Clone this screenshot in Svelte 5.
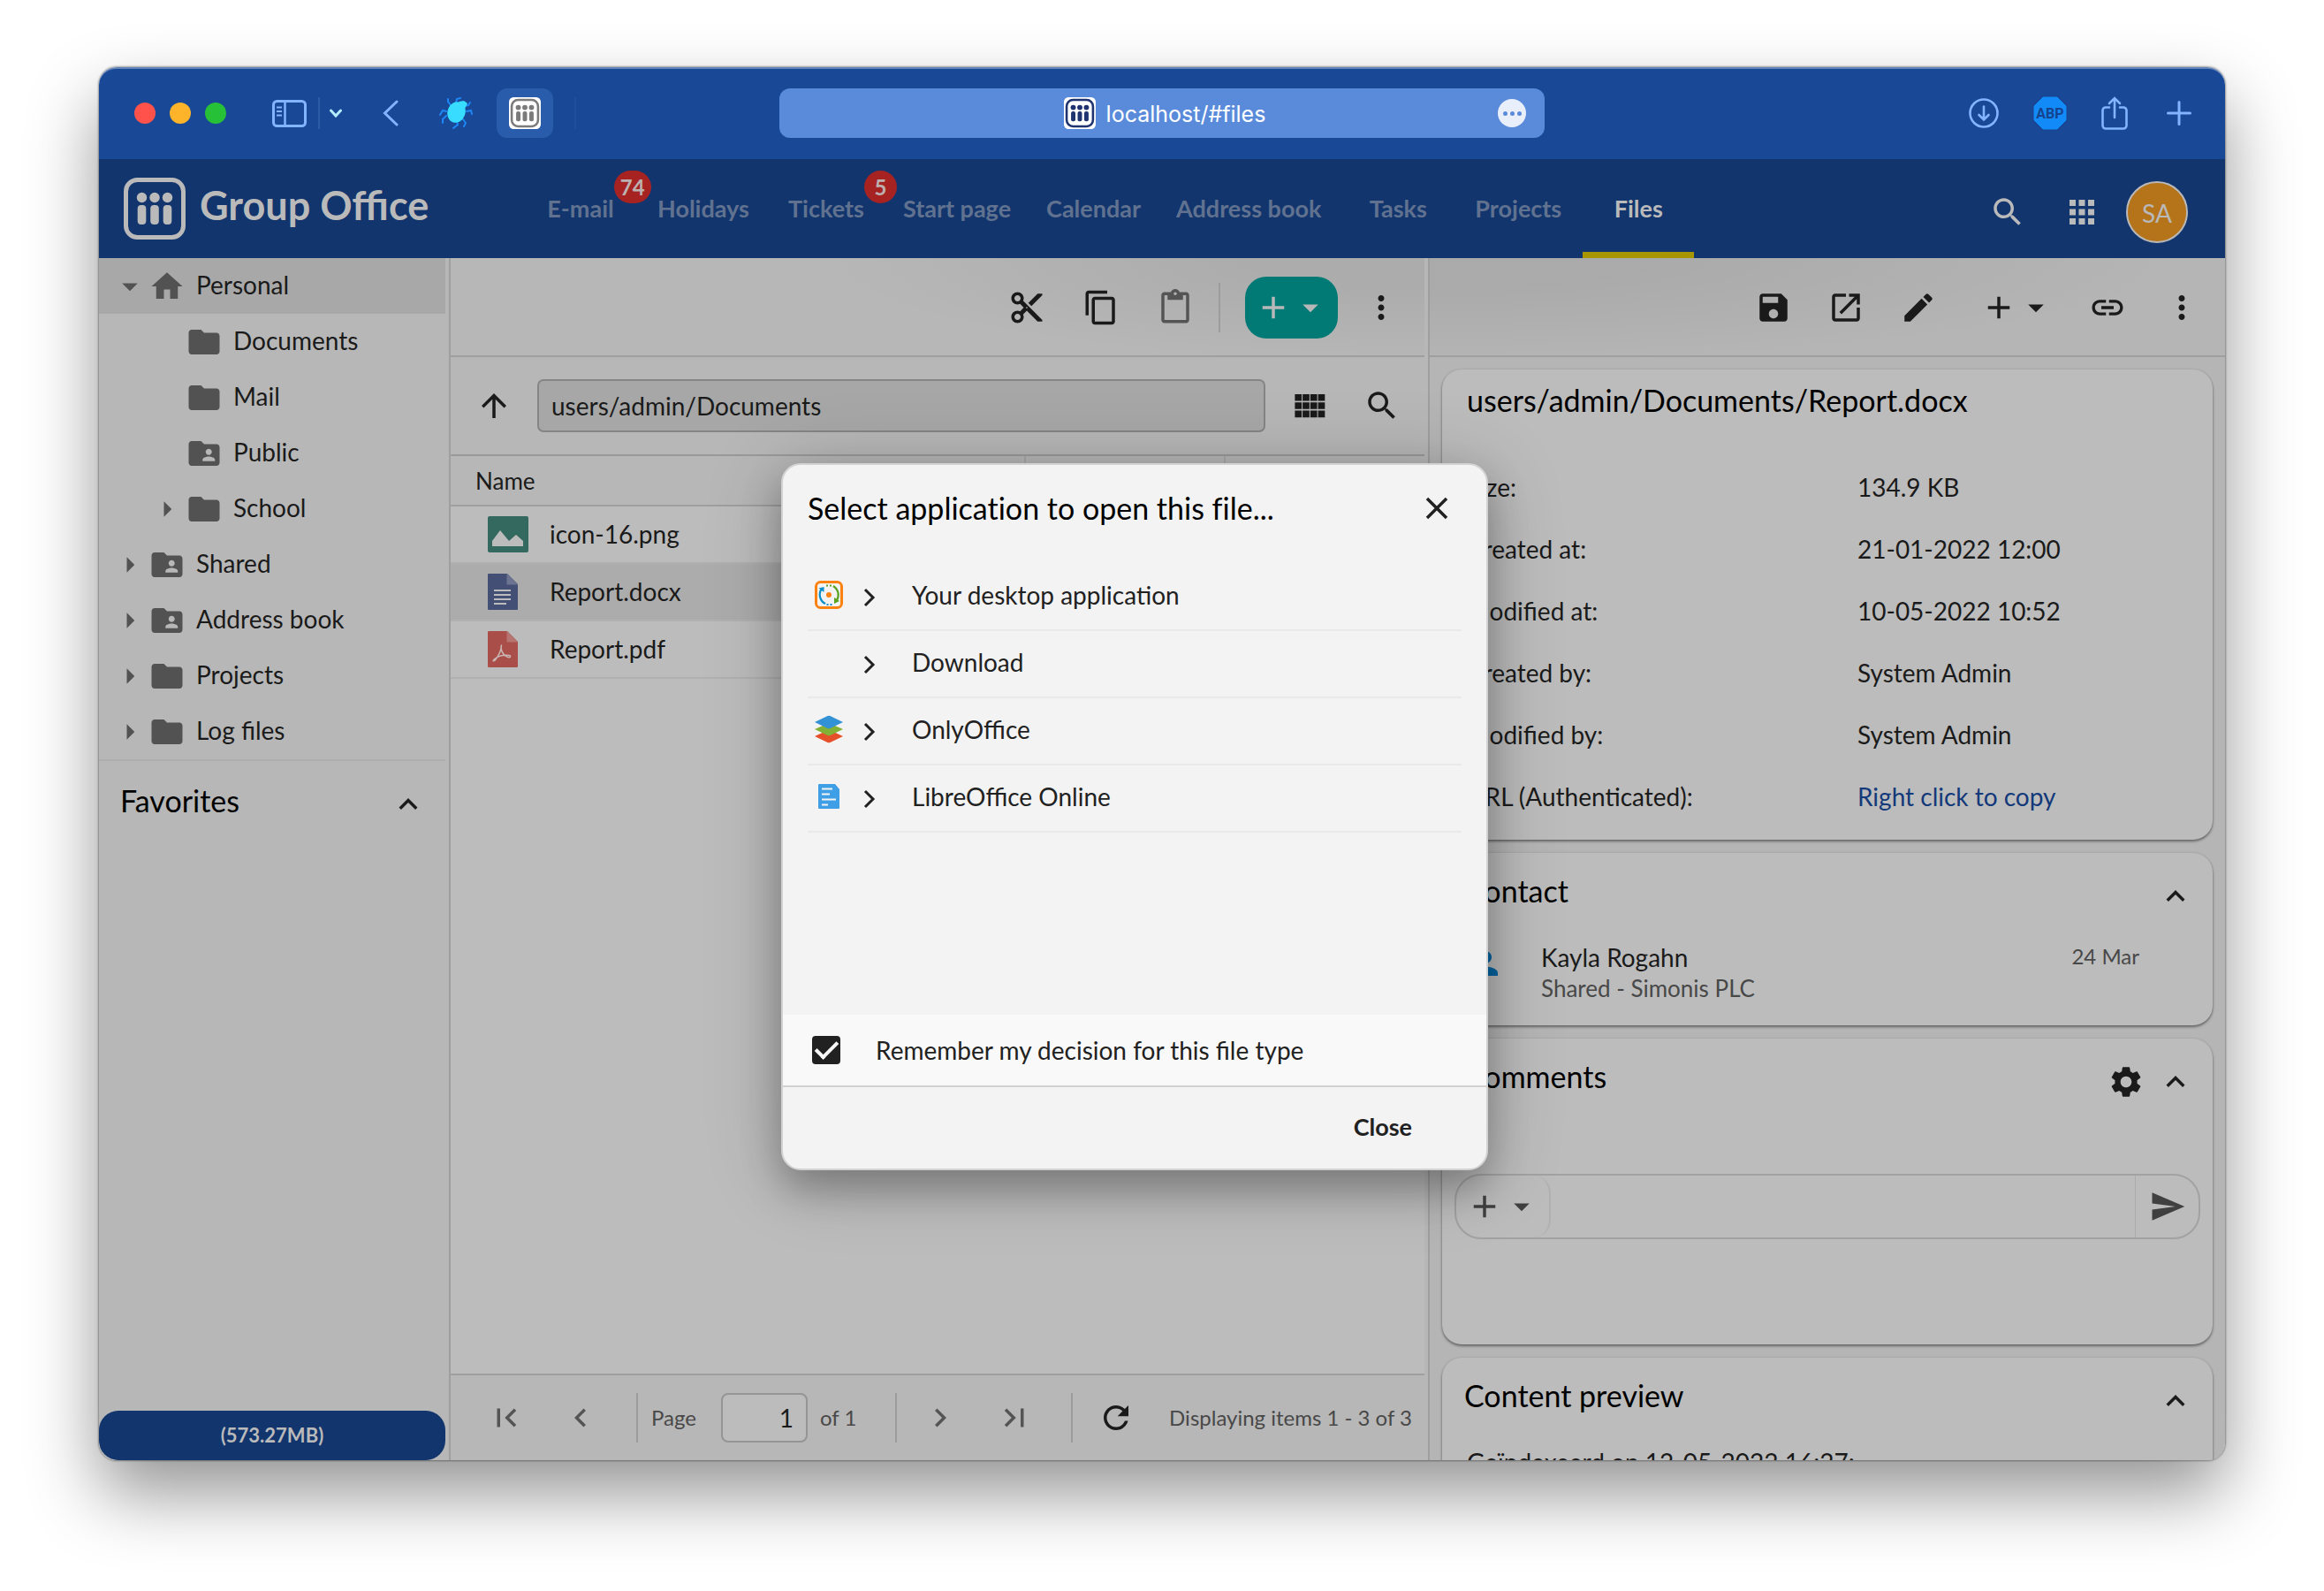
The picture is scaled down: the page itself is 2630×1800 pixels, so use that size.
<script>
  const icons = {
    home: 'M10 20v-6h4v6h5v-8h3L12 3 2 12h3v8z',
    folder: 'M10 4H4c-1.1 0-2 .9-2 2v12c0 1.1.9 2 2 2h16c1.1 0 2-.9 2-2V8c0-1.1-.9-2-2-2h-8l-2-2z',
    shared: 'M20 6h-8l-2-2H4c-1.1 0-1.99.9-1.99 2L2 18c0 1.1.9 2 2 2h16c1.1 0 2-.9 2-2V8c0-1.1-.9-2-2-2zm-5 3c1.1 0 2 .9 2 2s-.9 2-2 2-2-.9-2-2 .9-2 2-2zm4 8h-8v-1c0-1.33 2.67-2 4-2s4 .67 4 2v1z',
    caretDown: 'M7 10l5 5 5-5z',
    caretRight: 'M10 17l5-5-5-5z',
    up: 'M12 8l-6 6 1.41 1.41L12 10.83l4.59 4.58L18 14z',
    left: 'M15.41 7.41L14 6l-6 6 6 6 1.41-1.41L10.83 12z',
    right: 'M10 6L8.59 7.41 13.17 12l-4.58 4.59L10 18l6-6z',
    first: 'M18.41 16.59L13.82 12l4.59-4.59L17 6l-6 6 6 6zM6 6h2v12H6z',
    last: 'M5.59 7.41L10.18 12l-4.59 4.59L7 18l6-6-6-6zM16 6h2v12h-2z',
    cut: 'M9.64 7.64c.23-.5.36-1.05.36-1.64 0-2.21-1.79-4-4-4S2 3.79 2 6s1.79 4 4 4c.59 0 1.14-.13 1.64-.36L10 12l-2.36 2.36C7.14 14.13 6.59 14 6 14c-2.21 0-4 1.79-4 4s1.79 4 4 4 4-1.79 4-4c0-.59-.13-1.14-.36-1.64L12 14l7 7h3v-1L9.64 7.64zM6 8c-1.1 0-2-.89-2-2s.9-2 2-2 2 .89 2 2-.9 2-2 2zm0 12c-1.1 0-2-.89-2-2s.9-2 2-2 2 .89 2 2-.9 2-2 2zm6-7.5c-.28 0-.5-.22-.5-.5s.22-.5.5-.5.5.22.5.5-.22.5-.5.5zM19 3l-6 6 2 2 7-7V3z',
    copy: 'M16 1H4c-1.1 0-2 .9-2 2v14h2V3h12V1zm3 4H8c-1.1 0-2 .9-2 2v14c0 1.1.9 2 2 2h11c1.1 0 2-.9 2-2V7c0-1.1-.9-2-2-2zm0 16H8V7h11v14z',
    paste: 'M19 2h-4.18C14.4.84 13.3 0 12 0c-1.3 0-2.4.84-2.82 2H5c-1.1 0-2 .9-2 2v16c0 1.1.9 2 2 2h14c1.1 0 2-.9 2-2V4c0-1.1-.9-2-2-2zm-7 0c.55 0 1 .45 1 1s-.45 1-1 1-1-.45-1-1 .45-1 1-1zm7 18H5V4h2v3h10V4h2v16z',
    add: 'M19 13h-6v6h-2v-6H5v-2h6V5h2v6h6v2z',
    more: 'M12 8c1.1 0 2-.9 2-2s-.9-2-2-2-2 .9-2 2 .9 2 2 2zm0 2c-1.1 0-2 .9-2 2s.9 2 2 2 2-.9 2-2-.9-2-2-2zm0 6c-1.1 0-2 .9-2 2s.9 2 2 2 2-.9 2-2-.9-2-2-2z',
    arrowUp: 'M4 12l1.41 1.41L11 7.83V20h2V7.83l5.58 5.59L20 12l-8-8-8 8z',
    comfy: 'M2.5 4.5h4.4v4.4H2.5zM7.5 4.5h4.4v4.4H7.5zM12.5 4.5h4.4v4.4h-4.4zM17.5 4.5h4.4v4.4h-4.4zM2.5 9.8h4.4v4.4H2.5zM7.5 9.8h4.4v4.4H7.5zM12.5 9.8h4.4v4.4h-4.4zM17.5 9.8h4.4v4.4h-4.4zM2.5 15.1h4.4v4.4H2.5zM7.5 15.1h4.4v4.4H7.5zM12.5 15.1h4.4v4.4h-4.4zM17.5 15.1h4.4v4.4h-4.4z',
    search: 'M15.5 14h-.79l-.28-.27C15.41 12.59 16 11.11 16 9.5 16 5.91 13.09 3 9.5 3S3 5.91 3 9.5 5.91 16 9.5 16c1.61 0 3.09-.59 4.23-1.57l.27.28v.79l5 4.99L20.49 19l-4.99-5zm-6 0C7.01 14 5 11.99 5 9.5S7.01 5 9.5 5 14 7.01 14 9.5 11.99 14 9.5 14z',
    apps: 'M4 4h4v4H4zM10 4h4v4h-4zM16 4h4v4h-4zM4 10h4v4H4zM10 10h4v4h-4zM16 10h4v4h-4zM4 16h4v4H4zM10 16h4v4h-4zM16 16h4v4h-4z',
    save: 'M17 3H5c-1.11 0-2 .9-2 2v14c0 1.1.89 2 2 2h14c1.1 0 2-.9 2-2V7l-4-4zm-5 16c-1.66 0-3-1.34-3-3s1.34-3 3-3 3 1.34 3 3-1.34 3-3 3zm3-10H5V5h10v4z',
    open: 'M19 19H5V5h7V3H5c-1.11 0-2 .9-2 2v14c0 1.1.89 2 2 2h14c1.1 0 2-.9 2-2v-7h-2v7zM14 3v2h3.59l-9.83 9.83 1.41 1.41L19 6.41V10h2V3h-7z',
    edit: 'M3 17.25V21h3.75L17.81 9.94l-3.75-3.75L3 17.25zM20.71 7.04c.39-.39.39-1.02 0-1.41l-2.34-2.34c-.39-.39-1.02-.39-1.41 0l-1.83 1.83 3.75 3.75 1.83-1.83z',
    link: 'M3.9 12c0-1.71 1.39-3.1 3.1-3.1h4V7H7c-2.76 0-5 2.24-5 5s2.24 5 5 5h4v-1.9H7c-1.71 0-3.1-1.39-3.1-3.1zM8 13h8v-2H8v2zm9-6h-4v1.9h4c1.71 0 3.1 1.39 3.1 3.1s-1.39 3.1-3.1 3.1h-4V17h4c2.76 0 5-2.24 5-5s-2.24-5-5-5z',
    gear: 'M19.14 12.94c.04-.3.06-.61.06-.94 0-.32-.02-.64-.07-.94l2.03-1.58c.18-.14.23-.41.12-.61l-1.92-3.32c-.12-.22-.37-.29-.59-.22l-2.39.96c-.5-.38-1.03-.7-1.62-.94l-.36-2.54c-.04-.24-.24-.41-.48-.41h-3.84c-.24 0-.43.17-.47.41l-.36 2.54c-.59.24-1.13.57-1.62.94l-2.39-.96c-.22-.08-.47 0-.59.22L2.74 8.87c-.12.21-.08.47.12.61l2.03 1.58c-.05.3-.09.63-.09.94s.02.64.07.94l-2.03 1.58c-.18.14-.23.41-.12.61l1.92 3.32c.12.22.37.29.59.22l2.39-.96c.5.38 1.03.7 1.62.94l.36 2.54c.05.24.24.41.48.41h3.84c.24 0 .44-.17.47-.41l.36-2.54c.59-.24 1.13-.56 1.62-.94l2.39.96c.22.08.47 0 .59-.22l1.92-3.32c.12-.22.07-.47-.12-.61l-2.01-1.58zM12 15.6c-1.98 0-3.6-1.62-3.6-3.6s1.62-3.6 3.6-3.6 3.6 1.62 3.6 3.6-1.62 3.6-3.6 3.6z',
    send: 'M2.01 21L23 12 2.01 3 2 10l15 2-15 2z',
    refresh: 'M17.65 6.35C16.2 4.9 14.21 4 12 4c-4.42 0-7.99 3.58-7.99 8s3.57 8 7.99 8c3.73 0 6.84-2.55 7.73-6h-2.08c-.82 2.33-3.04 4-5.65 4-3.31 0-6-2.69-6-6s2.69-6 6-6c1.66 0 3.14.69 4.22 1.78L13 11h7V4l-2.35 2.35z',
    close: 'M19 6.41L17.59 5 12 10.59 6.41 5 5 6.41 10.59 12 5 17.59 6.41 19 12 13.41 17.59 19 19 17.59 13.41 12z',
    person: 'M12 12c2.21 0 4-1.79 4-4s-1.79-4-4-4-4 1.79-4 4 1.79 4 4 4zm0 2c-2.67 0-8 1.34-8 4v2h16v-2c0-2.66-5.33-4-8-4z'
  };

  const tabs = [
    { label: 'E-mail', badge: '74' },
    { label: 'Holidays' },
    { label: 'Tickets', badge: '5' },
    { label: 'Start page' },
    { label: 'Calendar' },
    { label: 'Address book' },
    { label: 'Tasks' },
    { label: 'Projects' },
    { label: 'Files', active: true }
  ];

  const tree = [
    { label: 'Personal', icon: 'home', caret: 'caretDown', selected: true },
    { label: 'Documents', icon: 'folder', child: true },
    { label: 'Mail', icon: 'folder', child: true },
    { label: 'Public', icon: 'shared', child: true },
    { label: 'School', icon: 'folder', caret: 'caretRight', child: true },
    { label: 'Shared', icon: 'shared', caret: 'caretRight' },
    { label: 'Address book', icon: 'shared', caret: 'caretRight' },
    { label: 'Projects', icon: 'folder', caret: 'caretRight' },
    { label: 'Log files', icon: 'folder', caret: 'caretRight' }
  ];

  const files = [
    { name: 'icon-16.png', type: 'image' },
    { name: 'Report.docx', type: 'doc', selected: true },
    { name: 'Report.pdf', type: 'pdf' }
  ];

  const details = [
    ['Size:', '134.9 KB'],
    ['Created at:', '21-01-2022 12:00'],
    ['Modified at:', '10-05-2022 10:52'],
    ['Created by:', 'System Admin'],
    ['Modified by:', 'System Admin']
  ];

  const handlers = [
    { label: 'Your desktop application', icon: 'desktop' },
    { label: 'Download', icon: '' },
    { label: 'OnlyOffice', icon: 'only' },
    { label: 'LibreOffice Online', icon: 'libre' }
  ];

  let path = $state('users/admin/Documents');
  let page = $state('1');
  let comment = $state('');
  let remember = $state(true);
</script>

{#snippet icon(name)}
  <svg class="icon" viewBox="0 0 24 24" aria-hidden="true"><path d={icons[name]} /></svg>
{/snippet}

{#snippet people()}
  <g fill="currentColor">
    <circle cx="20.500" cy="22.500" r="5.700" /><circle cx="35" cy="22.500" r="5.700" /><circle cx="49.500" cy="22.500" r="5.700" />
    <rect x="15.700" y="31" width="9.600" height="22" rx="4" /><rect x="30.200" y="31" width="9.600" height="22" rx="4" /><rect x="44.700" y="31" width="9.600" height="22" rx="4" />
  </g>
{/snippet}

{#snippet favicon()}
  <svg class="favicon" viewBox="0 0 70 70" aria-hidden="true">
    <rect width="70" height="70" rx="10" fill="#fff" />
    <rect x="6" y="6" width="58" height="58" rx="14" fill="none" stroke="currentColor" stroke-width="5" />
    {@render people()}
  </svg>
{/snippet}

<div class="stage">
  <div class="window">
    <div class="titlebar">
      <div class="tb-left">
        <div class="lights"><span class="red"></span><span class="amber"></span><span class="green"></span></div>
        <button class="tb-btn side" aria-label="Toggle sidebar">
          <svg viewBox="0 0 39 31" width="39" height="31" fill="none" stroke="#83b4ff" stroke-width="3">
            <rect x="1.500" y="1.500" width="36" height="28" rx="4" /><path d="M14.500 2v27" stroke-width="2.500" /><path d="M5 8.500h6M5 13h6M5 17.500h6" stroke-width="1.800" />
          </svg>
        </button>
        <span class="tb-line"></span>
        <button class="tb-btn menu" aria-label="Tab groups">
          <svg viewBox="0 0 14 10" width="14" height="10" fill="none" stroke="#b4ecff" stroke-width="3" stroke-linecap="round"><path d="M1.500 2L7 8l5.500-6" /></svg>
        </button>
        <button class="tb-btn back" aria-label="Back">
          <svg viewBox="0 0 18 30" width="18" height="30" fill="none" stroke="#83b4ff" stroke-width="3" stroke-linecap="round"><path d="M16 2L2.500 15 16 28" /></svg>
        </button>
        <button class="tb-btn bug" aria-label="Debugger">
          <svg viewBox="0 0 38 36" width="38" height="36" fill="none" stroke="#1e86f5" stroke-width="2" stroke-linecap="round">
            <path d="M13 9l-3-4V2M19 6l1-4 4-1M28 10l5-1 2-3M31 16l5-1 1 4M8 16l-4-1-3 5M8 21l-4 4v4M27 25l3 4-2 4M20 27l1 4-5 4" />
            <ellipse cx="19.500" cy="17" rx="10" ry="12" transform="rotate(20 19.500 17)" fill="#37dcff" stroke="none" /><path d="M22 5l6-1 4 3-3 6z" fill="#37dcff" stroke="none" />
          </svg>
        </button>
        <button class="pinned" aria-label="Group Office tab">{@render favicon()}</button>
        <span class="tb-line faint"></span>
      </div>
      <div class="address">
        <div class="url">{@render favicon()}<span>localhost/#files</span></div>
        <button class="url-more" aria-label="Page menu"><i></i><i></i><i></i></button>
      </div>
      <div class="tb-right">
        <button class="tb-btn" aria-label="Downloads">
          <svg viewBox="0 0 34 34" width="34" height="34" fill="none" stroke="#83b4ff" stroke-width="2.600" stroke-linecap="round"><circle cx="17" cy="17" r="15.500" /><path d="M17 9.500v15M11.500 19l5.500 5.500 5.500-5.500" /></svg>
        </button>
        <button class="tb-btn abp" aria-label="Adblock Plus">
          <svg viewBox="0 0 40 40" width="40" height="40"><path d="M12 1h16l11 11v16L28 39H12L1 28V12z" fill="#128af8" stroke="#14428c" stroke-width="1" /><text x="20" y="26" text-anchor="middle">ABP</text></svg>
        </button>
        <button class="tb-btn" aria-label="Share">
          <svg viewBox="0 0 30 38" width="30" height="38" fill="none" stroke="#83b4ff" stroke-width="2.600" stroke-linecap="round"><path d="M9 12.500H5a3.500 3.500 0 00-3.500 3.500v17A3.500 3.500 0 005 36.500h20a3.500 3.500 0 003.500-3.500V16a3.500 3.500 0 00-3.500-3.500h-4M15 24V2M9 8l6-6 6 6" /></svg>
        </button>
        <button class="tb-btn newtab" aria-label="New tab">
          <svg viewBox="0 0 28 28" width="28" height="28" stroke="#83b4ff" stroke-width="3" stroke-linecap="round"><path d="M14 1.500v25M1.500 14h25" /></svg>
        </button>
      </div>
    </div>

    <div class="app">
      <header class="header">
        <a class="brand" href="#start">
          <svg viewBox="0 0 70 70" width="70" height="70" aria-hidden="true"><rect x="2.500" y="2.500" width="65" height="65" rx="13" fill="none" stroke="currentColor" stroke-width="5" />{@render people()}</svg>
          <span>Group Office</span>
        </a>
        <nav class="tabs" aria-label="Modules">
          {#each tabs as t}
            <a href="#{t.label.toLowerCase().replace(' ', '-')}" class="tab" class:active={t.active}>
              <span class="tab-label">{t.label}{#if t.badge}<span class="badge">{t.badge}</span>{/if}</span>
            </a>
          {/each}
        </nav>
        <div class="header-tools">
          <button class="tool" aria-label="Search">{@render icon('search')}</button>
          <button class="tool" aria-label="Apps">{@render icon('apps')}</button>
          <button class="avatar" aria-label="Account">SA</button>
        </div>
      </header>

      <div class="body">
        <aside class="sidebar">
          <ul class="tree">
            {#each tree as node}
              <li>
                <button class="node" class:selected={node.selected} class:child={node.child}>
                  <span class="caret">{#if node.caret}{@render icon(node.caret)}{/if}</span>
                  {@render icon(node.icon)}
                  <span class="node-label">{node.label}</span>
                </button>
              </li>
            {/each}
          </ul>
          <section class="favorites">
            <h2>Favorites</h2>
            <button class="mini" aria-label="Collapse favorites">{@render icon('up')}</button>
          </section>
          <div class="quota">(573.27MB)</div>
        </aside>

        <div class="splitter"></div>

        <main class="main">
          <div class="toolbar glow">
            <button class="tool" aria-label="Cut">{@render icon('cut')}</button>
            <button class="tool" aria-label="Copy">{@render icon('copy')}</button>
            <button class="tool" aria-label="Paste" disabled>{@render icon('paste')}</button>
            <span class="sep before-add"></span>
            <button class="add" aria-label="Add">{@render icon('add')}{@render icon('caretDown')}</button>
            <button class="tool" aria-label="More">{@render icon('more')}</button>
          </div>
          <div class="pathbar">
            <button class="tool" aria-label="Parent folder">{@render icon('arrowUp')}</button>
            <input class="path" aria-label="Path" bind:value={path} />
            <div class="pair">
              <button class="tool" aria-label="Grid view">{@render icon('comfy')}</button>
              <button class="tool" aria-label="Search files">{@render icon('search')}</button>
            </div>
          </div>
          <table class="files">
            <thead>
              <tr><th scope="col">Name</th><th class="c2" aria-label="Size"></th><th class="c3" aria-label="Modified at"></th></tr>
            </thead>
            <tbody>
              {#each files as f}
                <tr class:selected={f.selected}>
                  <td colspan="3">
                    <div class="file">
                      <svg class="file-icon" viewBox="0 0 46 41" aria-hidden="true">
                        {#if f.type === 'image'}
                          <rect width="46" height="41" rx="2" fill="#34695f" /><path d="M5 34V28l9-12 10 12 8-7 8 7v6z" fill="#bcbcbc" />
                        {:else}
                          <path d="M1 0h21l12 12v28a1 1 0 01-1 1H1a1 1 0 01-1-1V1a1 1 0 011-1z" fill={f.type === 'doc' ? '#434f75' : '#aa4e49'} />
                          <path d="M21.500 0L34 12.500H21.500z" fill={f.type === 'doc' ? '#6c7491' : '#b67571'} />
                          {#if f.type === 'doc'}
                            <path d="M7 19h19M7 24h19M7 29h19M7 34h14" stroke="#bcbcbc" stroke-width="2.200" />
                          {:else}
                            <path d="M15.500 15.500c-1.500 4 .5 10 5 13s6.500-.5 4-1c-4-.5-11 0-15.500 3s-3 5 0 1.500c3-4 6.500-11 6.500-16.500z" fill="none" stroke="#c9b4b3" stroke-width="1.500" />
                          {/if}
                        {/if}
                      </svg>
                      <span>{f.name}</span>
                    </div>
                  </td>
                </tr>
              {/each}
            </tbody>
          </table>
          <div class="pager">
            <button class="tool" disabled aria-label="First page">{@render icon('first')}</button>
            <button class="tool" disabled aria-label="Previous page">{@render icon('left')}</button>
            <span class="sep s1"></span>
            <label for="page">Page</label>
            <input id="page" class="page" bind:value={page} />
            <span class="of">of 1</span>
            <span class="sep s2"></span>
            <button class="tool" disabled aria-label="Next page">{@render icon('right')}</button>
            <button class="tool" disabled aria-label="Last page">{@render icon('last')}</button>
            <span class="sep s3"></span>
            <button class="tool" aria-label="Refresh">{@render icon('refresh')}</button>
            <span class="status">Displaying items 1 - 3 of 3</span>
          </div>
        </main>

        <div class="splitter"></div>

        <section class="detail">
          <div class="toolbar dark">
            <button class="tool narrow" aria-label="Save">{@render icon('save')}</button>
            <button class="tool narrow" aria-label="Open">{@render icon('open')}</button>
            <button class="tool narrow" aria-label="Edit">{@render icon('edit')}</button>
            <button class="plus" aria-label="Add">{@render icon('add')}{@render icon('caretDown')}</button>
            <button class="tool" aria-label="Link">{@render icon('link')}</button>
            <button class="tool" aria-label="More">{@render icon('more')}</button>
          </div>
          <div class="cards">
            <article class="card info">
              <h2>users/admin/Documents/Report.docx</h2>
              <dl>
                {#each details as [k, v]}
                  <dt>{k}</dt><dd>{v}</dd>
                {/each}
                <dt>URL (Authenticated):</dt><dd><a href="#copy">Right click to copy</a></dd>
              </dl>
            </article>

            <article class="card contact">
              <div class="card-head">
                <h2>Contact</h2>
                <button class="mini" aria-label="Collapse contact">{@render icon('up')}</button>
              </div>
              <div class="person">
                {@render icon('person')}
                <div class="who"><span>Kayla Rogahn</span><small>Shared - Simonis PLC</small></div>
                <time>24 Mar</time>
              </div>
            </article>

            <article class="card comments">
              <div class="card-head">
                <h2>Comments</h2>
                <button class="mini" aria-label="Comment settings">{@render icon('gear')}</button>
                <button class="mini" aria-label="Collapse comments">{@render icon('up')}</button>
              </div>
              <div class="composer">
                <button class="attach" aria-label="Attach">{@render icon('add')}{@render icon('caretDown')}</button>
                <input aria-label="Comment" bind:value={comment} />
                <button class="send" aria-label="Send">{@render icon('send')}</button>
              </div>
            </article>

            <article class="card">
              <div class="card-head">
                <h2>Content preview</h2>
                <button class="mini" aria-label="Collapse preview">{@render icon('up')}</button>
              </div>
              <p>Geïndexeerd op 12-05-2022 16:27:</p>
            </article>
          </div>
        </section>
      </div>

      <div class="dialog" role="dialog" aria-labelledby="dlg-title">
        <div class="dlg-head">
          <h2 id="dlg-title">Select application to open this file...</h2>
          <button class="mini" aria-label="Close dialog">{@render icon('close')}</button>
        </div>
        <ul class="choices">
          {#each handlers as h}
            <li>
              <button class="choice">
                <span class="choice-icon">
                  {#if h.icon === 'desktop'}
                    <svg viewBox="0 0 32 32" aria-hidden="true" fill="none">
                      <rect x="1.500" y="1.500" width="29" height="29" rx="5" stroke="#fb8211" stroke-width="3" />
                      <circle cx="16" cy="16" r="3" fill="#fb8211" />
                      <path d="M12 26C6 23 3.500 15 8 9" stroke="#0a8fc9" stroke-width="2.200" /><path d="M4.500 8.500L10.500 7v6z" fill="#0a8fc9" />
                      <path d="M21 6c6 4 7.500 11 3.500 17" stroke="#5ba321" stroke-width="2.200" /><path d="M22 19v7l6-3z" fill="#5ba321" />
                      <path d="M13 5.500h2M17 5.500h2" stroke="#5ba321" stroke-width="2" /><path d="M13.500 27h2M17.500 27h2" stroke="#0a8fc9" stroke-width="2" />
                    </svg>
                  {:else if h.icon === 'only'}
                    <svg viewBox="0 0 32 32" aria-hidden="true">
                      <path d="M16 16.500l16 7.500-14.500 7q-1.500.7-3 0L0 24z" fill="#e5502a" />
                      <path d="M16 9l16 7-14.500 7q-1.500.7-3 0L0 16z" fill="#83b135" />
                      <path d="M14.500 1q1.500-.7 3 0L32 8l-14.500 7q-1.500.7-3 0L0 8z" fill="#3391d6" />
                    </svg>
                  {:else if h.icon === 'libre'}
                    <svg viewBox="0 0 32 32" aria-hidden="true">
                      <path d="M5 2h18l5 6v21a1 1 0 01-1 1H5a1 1 0 01-1-1V3a1 1 0 011-1z" fill="#3e9ee6" />
                      <path d="M8 7.500h12M8 13.500h9M8 19.500h16M8 25.500h7" stroke="#f3f3f3" stroke-width="2" />
                    </svg>
                  {/if}
                </span>
                <svg class="chev" viewBox="0 0 14 22" aria-hidden="true"><path d="M2 2l9 9-9 9" /></svg>
                <span>{h.label}</span>
              </button>
            </li>
          {/each}
        </ul>
        <label class="remember">
          <input type="checkbox" bind:checked={remember} />
          <span>Remember my decision for this file type</span>
        </label>
        <div class="dlg-foot"><button>Close</button></div>
      </div>
    </div>
  </div>
</div>

<style>
  :global(body) { margin: 0; background: #fff; }
  * { box-sizing: border-box; }
  .stage {
    height: 100vh;
    padding: 76px 112px 148px;
    display: flex;
    font: 28px/40px Lato, "Open Sans", sans-serif;
    color: #1a1a1a;
  }
  button, input { font: inherit; color: inherit; margin: 0; }
  button { border: 0; padding: 0; background: none; }
  a { color: inherit; text-decoration: none; }
  ul { list-style: none; margin: 0; padding: 0; }
  h2 { margin: 0; font-size: 34px; line-height: 40px; font-weight: 400; color: #000; font-variant-ligatures: none; }
  .icon { width: 42px; height: 42px; fill: currentColor; display: block; flex: none; }

  .window {
    flex: 1;
    min-width: 0;
    display: flex;
    flex-direction: column;
    border-radius: 20px;
    box-shadow: 0 0 2px 1px rgba(0, 0, 0, .35), 0 38px 80px rgba(0, 0, 0, .42);
  }

  .titlebar {
    height: 104px;
    display: grid;
    grid-template-columns: 1fr 36% 1fr;
    align-items: center;
    background: #184896;
    border-top: 2px solid #6283b8;
    padding-bottom: 2px;
    border-radius: 20px 20px 0 0;
  }
  .tb-left, .tb-right { display: flex; align-items: center; }
  .tb-left { padding-left: 40px; }
  .tb-right { justify-content: flex-end; gap: 40px; padding-right: 38px; }
  .tb-btn { display: flex; align-items: center; justify-content: center; }
  .newtab { margin-left: 4px; }
  .lights { display: flex; gap: 16px; }
  .lights span { width: 24px; height: 24px; border-radius: 50%; }
  .red { background: #fe524b; }
  .amber { background: #fdb42a; }
  .green { background: #27c138; }
  .side { margin-left: 52px; }
  .tb-line { width: 2px; height: 36px; background: #2c5ba6; margin-left: 13px; }
  .menu { margin-left: 11px; }
  .back { margin-left: 46px; }
  .bug { margin-left: 46px; }
  .pinned { width: 64px; height: 56px; border-radius: 12px; background: #295caa; color: #7b7b7b; margin-left: 27px; display: flex; align-items: center; justify-content: center; }
  .favicon { width: 36px; height: 36px; display: block; }
  .faint { background: #1f4f9d; margin-left: 24px; }
  .address { height: 56px; border-radius: 12px; background: #5a8bdb; display: flex; align-items: center; padding: 0 21px; }
  .url { flex: 1; display: flex; align-items: center; justify-content: center; gap: 12px; padding-left: 38px; color: #fff; font: 25px/40px Inter, sans-serif; }
  .url span { padding-top: 2px; }
  .url .favicon { color: #1f3370; }
  .url-more { width: 32px; height: 32px; border-radius: 50%; background: #e8effa; display: flex; align-items: center; justify-content: center; gap: 3px; }
  .url-more i { width: 5px; height: 5px; border-radius: 50%; background: #5a8bdb; }
  .abp text { font: 700 16px Roboto, sans-serif; fill: #14428c; }
  .abp { margin: 0 -2px; }

  .app { flex: 1; min-height: 0; display: flex; flex-direction: column; position: relative; }
  .header { height: 112px; flex: none; display: flex; align-items: stretch; background: #12356e; color: #bababa; }
  .brand { display: flex; align-items: center; gap: 16px; padding-left: 28px; width: 482px; font-size: 45px; font-weight: 700; }
  .brand span { padding-bottom: 8px; white-space: nowrap; }
  .tabs { display: flex; gap: 8px; }
  .tab { min-width: 126px; padding: 0 16px; display: flex; align-items: center; justify-content: center; font-size: 27px; font-weight: 700; color: #60728f; border-bottom: 7px solid transparent; border-top: 7px solid transparent; white-space: nowrap; }
  .tab.active { color: #bababa; border-bottom-color: #a89502; }
  .tab-label { position: relative; }
  .badge { position: absolute; left: 100%; top: -23px; min-width: 37px; height: 37px; padding: 0 7px; border-radius: 19px; background: #a72322; color: #bcb0b0; font-size: 24px; line-height: 37px; text-align: center; }
  .header-tools { margin-left: auto; display: flex; align-items: center; padding: 8px 42px 0 0; }
  .header-tools .tool:nth-child(2) { margin-right: 8px; }
  .avatar { width: 70px; height: 70px; border-radius: 50%; background: #b5731a; border: 2px solid #b9b9b9; color: #b9b9b9; padding-top: 2px; }
  .tool { width: 84px; height: 84px; display: flex; align-items: center; justify-content: center; flex: none; }
  .tool:disabled { color: #545454; }

  .body { flex: 1; min-height: 0; display: flex; background: #b7b7b7; border-radius: 0 0 20px 20px; overflow: hidden; }
  .sidebar { width: 392px; flex: none; display: flex; flex-direction: column; }
  .tree { border-bottom: 2px solid #adadad; }
  .node { width: 100%; height: 63px; display: flex; align-items: center; padding-left: 14px; text-align: left; }
  .node.child { padding-left: 56px; }
  .node.selected { background: #a8a8a8; }
  .node .icon { color: #525252; }
  .caret { width: 42px; }
  .node-label { padding: 0 0 3px 12px; }
  .favorites { display: flex; align-items: center; justify-content: space-between; padding: 25px 21px 0 24px; }
  .favorites h2 { padding-bottom: 8px; }
  .mini { width: 42px; height: 42px; flex: none; }
  .quota { margin-top: auto; height: 56px; border-radius: 22px; background: #12356e; color: #bababa; font-size: 22px; line-height: 56px; font-weight: 700; text-align: center; }
  .splitter { width: 6px; flex: none; border-right: 2px solid #9f9f9f; }

  .main { flex: 1; min-width: 0; display: flex; flex-direction: column; background: linear-gradient(#b7b7b7 400px, #bcbcbc 400px); }
  .toolbar { height: 112px; flex: none; display: flex; align-items: center; justify-content: flex-end; padding: 2px 7px 0 0; border-bottom: 2px solid #9f9f9f; }
  .glow { background: radial-gradient(ellipse 680px 120px at 100% 0, rgba(0, 0, 0, .06) 30%, transparent); }
  .dark { background: radial-gradient(ellipse 860px 120px at 0 0, rgba(0, 0, 0, .06) 30%, transparent); }
  .sep { width: 2px; height: 56px; background: #9c9c9c; flex: none; }
  .before-add { margin: 0 28px 0 7px; }
  .add { width: 105px; height: 70px; border-radius: 24px; background: #017a75; color: #b8b8b8; display: flex; align-items: center; justify-content: center; margin-right: 7px; }
  .pathbar { height: 112px; flex: none; display: flex; align-items: center; gap: 8px; padding: 0 7px 0 8px; border-bottom: 2px solid #9a9a9a; }
  .pathbar .tool, .narrow { width: 82px; }
  .pair { display: flex; padding-left: 1px; }
  .path { flex: 1; min-width: 0; height: 60px; border: 2px solid #858585; border-radius: 7px; background: #a7a7a7; padding: 0 14px; outline: none; }
  .files { border-collapse: collapse; table-layout: fixed; width: 100%; }
  .files th { height: 56px; padding: 0 0 0 28px; text-align: left; font-size: 26px; font-weight: 400; border-bottom: 2px solid #9f9f9f; }
  .files .c2, .files .c3 { width: 226px; border-left: 2px solid #a8a8a8; }
  .files td { height: 65px; padding: 0; border-bottom: 2px solid #b0b0b0; background: #bcbcbc; }
  .files .selected td { background: #acacac; }
  .file { display: flex; align-items: center; gap: 24px; padding-left: 42px; }
  .file span { padding-bottom: 2px; }
  .file-icon { width: 46px; height: 41px; }
  .pager { margin-top: auto; height: 98px; flex: none; display: flex; align-items: center; border-top: 2px solid #9f9f9f; padding: 0 14px 0 21px; font-size: 24px; color: #484848; background: #b7b7b7; white-space: nowrap; }
  .s1 { margin: 0 15px 0 21px; }
  .s2 { margin: 0 7px 0 44px; }
  .s3 { margin: 0 7px 0 22px; }
  .page { width: 98px; height: 56px; margin: 0 14px 0 28px; border: 2px solid #959595; border-radius: 8px; background: #bcbcbc; padding: 0 14px; text-align: right; font-size: 28px; color: #1a1a1a; outline: none; }
  .pager .tool:not(:disabled) { color: #1a1a1a; }
  .status { margin-left: auto; }

  .detail { width: 900px; flex: none; display: flex; flex-direction: column; background: #b5b5b5; }
  .plus { display: flex; margin: 0 18px 0 29px; }
  .cards { flex: 1; min-height: 0; overflow: hidden; padding: 14px; display: flex; flex-direction: column; gap: 15px; }
  .card { flex: none; border-radius: 22px; background: #bcbcbc; padding: 0 21px 0 25px; box-shadow: 0 2px 3px rgba(0, 0, 0, .42), 0 0 3px rgba(0, 0, 0, .12); }
  .info { padding: 15px 28px 14px; }
  dl { display: grid; grid-template-columns: 13fr 11fr; margin: 43px 0 0; }
  dt, dd { margin: 0; line-height: 70px; }
  dd a { color: #13397a; }
  .card-head { height: 98px; display: flex; align-items: center; }
  .card-head h2 { flex: 1; padding-bottom: 12px; }
  .card-head .mini + .mini { margin-left: 14px; }
  .contact { height: 195px; }
  .person { display: flex; padding: 3px 62px 0 3px; }
  .person .icon { color: #0465a3; margin-top: 3px; }
  .who { flex: 1; display: flex; flex-direction: column; padding-left: 42px; }
  .who span { line-height: 35px; }
  .who small { font-size: 26px; line-height: 35px; color: #484848; }
  time { font-size: 24px; line-height: 32px; color: #484848; }
  .comments { height: 346px; padding: 0 14px; }
  .comments .card-head { padding: 0 7px 0 11px; margin-bottom: 55px; }
  .composer { height: 74px; display: flex; border: 2px solid #a2a2a2; border-radius: 30px; overflow: hidden; color: #404040; }
  .attach { display: flex; align-items: center; padding: 0 10px 0 11px; border-right: 2px solid #b0b0b0; border-radius: 0 20px 20px 0; }
  .composer input { flex: 1; min-width: 0; border: 0; background: none; padding: 0 14px; outline: none; }
  .send { width: 72px; display: flex; align-items: center; justify-content: center; border-left: 1px solid #acacac; }
  .card p { margin: 0 0 0 3px; padding-bottom: 20px; }

  .dialog {
    position: absolute;
    left: 772px;
    top: 344px;
    width: 800px;
    height: 800px;
    display: flex;
    flex-direction: column;
    border: 2px solid #d2d2d2;
    border-radius: 22px;
    overflow: hidden;
    background: #f3f3f3;
    color: #212121;
    box-shadow: 0 22px 44px rgba(0, 0, 0, .26), 0 8px 90px rgba(0, 0, 0, .2);
  }
  .dlg-head { height: 112px; flex: none; display: flex; align-items: center; justify-content: space-between; padding: 0 35px 14px 28px; }
  .choices { flex: 1; padding: 0 28px; }
  .choice { width: 100%; height: 76px; display: flex; align-items: center; padding: 0 0 4px 8px; border-bottom: 2px solid #e9e9e9; text-align: left; }
  .choice-icon { width: 32px; height: 32px; margin-right: 23px; }
  .choice-icon svg { display: block; }
  .chev { width: 14px; height: 22px; margin: 6px 41px 0 0; fill: none; stroke: #212121; stroke-width: 3; }
  .remember { height: 80px; flex: none; display: flex; align-items: center; gap: 40px; padding-left: 33px; background: #f9f9f9; }
  .remember input { appearance: none; width: 32px; height: 32px; border: 3px solid #212121; border-radius: 4px; display: grid; place-items: center; }
  .remember input:checked { background: #212121; }
  .remember input:checked::before { content: ""; width: 21px; height: 10px; border: solid #f9f9f9; border-width: 0 0 4px 4px; rotate: -45deg; translate: 0 -3px; }
  .dlg-foot { height: 94px; flex: none; display: flex; align-items: center; justify-content: flex-end; border-top: 2px solid #d1d1d1; padding: 0 84px 2px 0; font-size: 27px; font-weight: 700; }
</style>
